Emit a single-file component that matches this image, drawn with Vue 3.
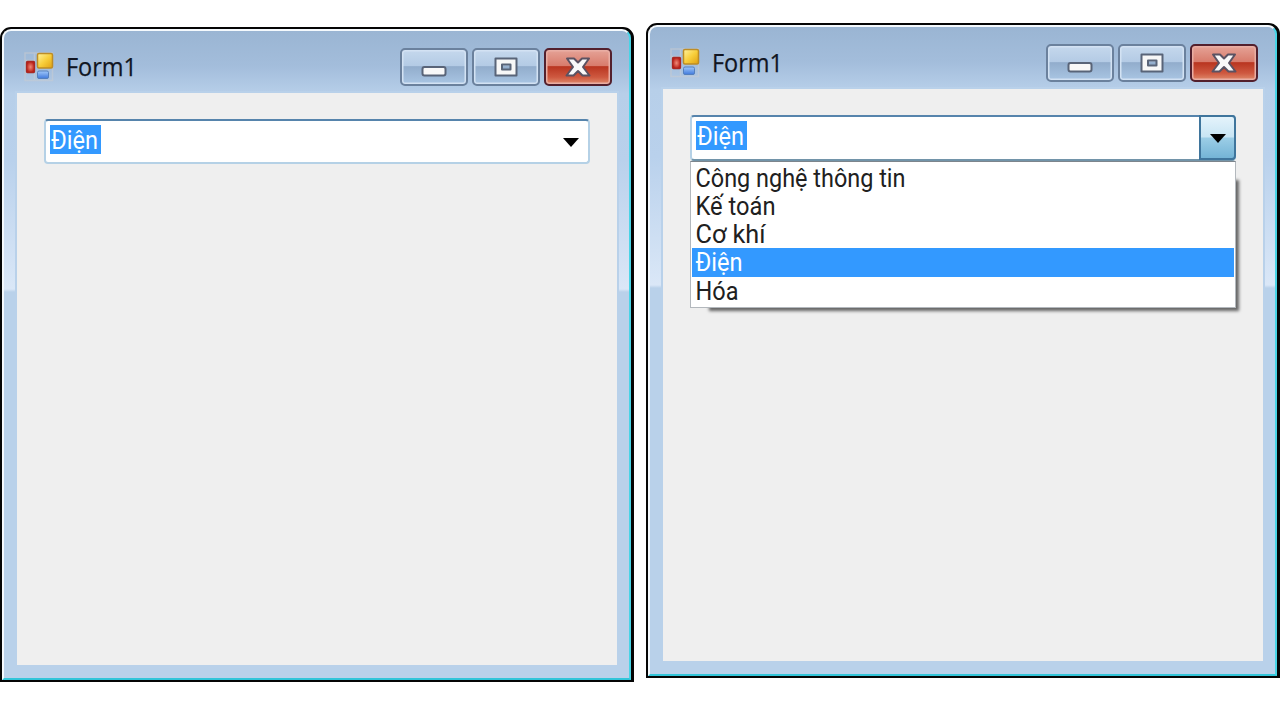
<script setup>
const items = [
  { text: 'Công nghệ thông tin', w: 210 },
  { text: 'Kế toán', w: 80 },
  { text: 'Cơ khí', w: 70 },
  { text: 'Điện', w: 47, on: true },
  { text: 'Hóa', w: 43 }
]
const windows = [{ id: 'closed', open: false }, { id: 'open', open: true }]
</script>

<template>
  <main class="page">
    <section v-for="w in windows" :key="w.id" class="window" :class="w.id">
      <div class="glass">
        <header class="titlebar">
          <svg class="appicon" width="30" height="30" viewBox="0 0 30 30">
            <defs>
              <linearGradient id="gy" x1="0" y1="0" x2="1" y2="1"><stop offset="0" stop-color="#fff3a0" /><stop offset=".5" stop-color="#f8cf3c" /><stop offset="1" stop-color="#e0a010" /></linearGradient>
              <linearGradient id="gb" x1="0" y1="0" x2="0" y2="1"><stop offset="0" stop-color="#a0c8fa" /><stop offset="1" stop-color="#4079dc" /></linearGradient>
              <radialGradient id="gr"><stop offset="0" stop-color="#f08a78" /><stop offset="1" stop-color="#bb2018" /></radialGradient>
            </defs>
            <path d="M1 1H28.500V28.500H1ZM1 8.500H11M10.500 1V8M10.500 22V28" fill="none" stroke="#c6cbd2" stroke-width="1.500" opacity=".6" />
            <rect x="2.500" y="9.500" width="8" height="11" rx="1" fill="url(#gr)" stroke="#a92823" stroke-width="1.300" />
            <rect x="13.500" y="1.500" width="15" height="14.500" rx="1.500" fill="url(#gy)" stroke="#bd8d26" stroke-width="1.500" />
            <rect x="13.500" y="19" width="11" height="7.500" rx="1.500" fill="url(#gb)" stroke="#5580bd" />
          </svg>
          <svg class="title" width="90" height="40"><text x="2" y="27" textLength="71" lengthAdjust="spacingAndGlyphs">Form1</text></svg>
          <div class="controls">
            <span class="ctl"><svg width="66" height="36"><rect x="21.500" y="18" width="23" height="8.500" rx="2" fill="#f8f8f8" stroke="#596478" stroke-width="2" /></svg></span>
            <span class="ctl"><svg width="66" height="36"><path d="M22.500 9.500H43.500V26.500H22.500ZM29 15.500V20.500H37.500V15.500Z" fill="#f7f7f7" fill-rule="evenodd" stroke="#596478" stroke-width="2" stroke-linejoin="round" /></svg></span>
            <span class="ctl close"><svg width="66" height="36"><path d="M22 9.500H29L33 13.500L37 9.500H44L38 18L44.500 26.500H37.500L33 22L28.500 26.500H21.500L28 18Z" fill="#f9f9f9" stroke="#5b5262" stroke-width="2" stroke-linejoin="round" /></svg></span>
          </div>
        </header>
        <div class="client">
          <div class="combo">
            <div class="field">
              <span class="selected"><svg width="51" height="29"><text x="1" :y="w.open ? 24.3 : 23.5" textLength="47" lengthAdjust="spacingAndGlyphs">Điện</text></svg></span>
            </div>
            <span class="arrow"><svg width="16" height="9"><path d="M0 0H16L8 9Z" /></svg></span>
          </div>
          <div v-if="w.open" class="dropdown">
            <ul class="list">
              <li v-for="i in items" :key="i.text" :class="{ on: i.on }">
                <svg width="240" height="29"><text x="3.5" y="23" :textLength="i.w" lengthAdjust="spacingAndGlyphs">{{ i.text }}</text></svg>
              </li>
            </ul>
          </div>
        </div>
      </div>
    </section>
  </main>
</template>

<style>
body { background: #fff; }
</style>

<style scoped>
* { box-sizing: border-box; }
.page { width: 1280px; height: 720px; display: flex; gap: 12px; align-items: flex-start; overflow: hidden; background: #fff; }
svg { display: block; flex: none; overflow: visible; }
.window { width: 634px; height: 655px; flex: none; border: 2px solid #050505; border-right-width: 3px; border-radius: 11px 11px 0 0; background: #050505; }
.closed { margin-top: 27px; }
.open { margin-top: 23px; }
.glass { height: 651px; padding: 0 12px 13px 13px; border: 2px solid #f4f9fd; border-right-color: #48d4e6; border-bottom-color: #31c5d9; border-radius: 9px 9px 0 0; background: linear-gradient(#9ab5d3 0, #a3bddb 35px, #b7cfe9 63px, #b9d1ec 130px, #dae7f7 258px, #b9d1ea 261px); }
.titlebar { height: 62px; display: flex; align-items: flex-start; padding: 0 5px 0 7px; }
.appicon { margin-top: 21px; }
.title { margin: 18px 0 0 10px; }
.title text { font: 26px "Open Sans", "Noto Sans", sans-serif; fill: #101522; stroke: #101522; stroke-width: .25px; }
.controls { margin: 17px 0 0 auto; display: flex; gap: 4px; }
.ctl { width: 68px; height: 38px; border: 2px solid #6b819d; border-radius: 5px; background: linear-gradient(#c5d8ed 0, #b4cbe5 46%, #92adcc 49%, #a9c5e3 100%); box-shadow: inset 0 0 0 1.5px #d3e2f3; }
.ctl svg { margin: -1px 0 0 -1px; }
.close { border-color: #53202d; background: linear-gradient(#e5a397 0, #d87c6c 46%, #b93520 49%, #ce5940 80%, #df8b6c 100%); box-shadow: inset 0 0 0 1.5px #e9aea4; }
.client { height: 572px; padding: 26px 27px; background: #efefef; box-shadow: 0 0 0 2px #b9d1ea; }
.combo { width: 546px; height: 45px; display: flex; border: 2px solid #b5d1e6; border-top-color: #5684ac; border-radius: 4px; background: #fff; }
.field { flex: 1; padding: 4px; }
.selected { display: block; width: 51px; height: 29px; background: #3399ff; }
.selected text { font: 25px Roboto, "Noto Sans", sans-serif; fill: #fff; }
.arrow { width: 35px; display: flex; align-items: center; justify-content: center; padding-top: 1px; }
.open .combo { height: 46px; border-bottom-color: #7294a9; }
.open .arrow { width: 37px; margin: -2px -2px -1px 0; border: 2px solid #3f759c; border-radius: 0 4px 4px 0; background: linear-gradient(#e4f3fb 0, #c8e5f4 48%, #9bcde6 52%, #74b4d6 100%); }
.dropdown { position: relative; z-index: 0; width: 546px; height: 147px; }
.dropdown::before { content: ""; position: absolute; z-index: -1; left: 16px; top: 16px; right: 0; bottom: 0; box-shadow: 3px 3px 3px #666; }
.list { height: 147px; margin: 0; padding: 1.500px 0 0; list-style: none; background: #fff; border: 1px solid #b3b8bd; border-top-color: #7d858c; }
.list li { height: 28.300px; margin: 0 1px; }
.list text { font: 25px Roboto, "Noto Sans", sans-serif; fill: #202020; }
.list .on { background: #3399ff; }
.list .on text { fill: #fff; }
</style>
